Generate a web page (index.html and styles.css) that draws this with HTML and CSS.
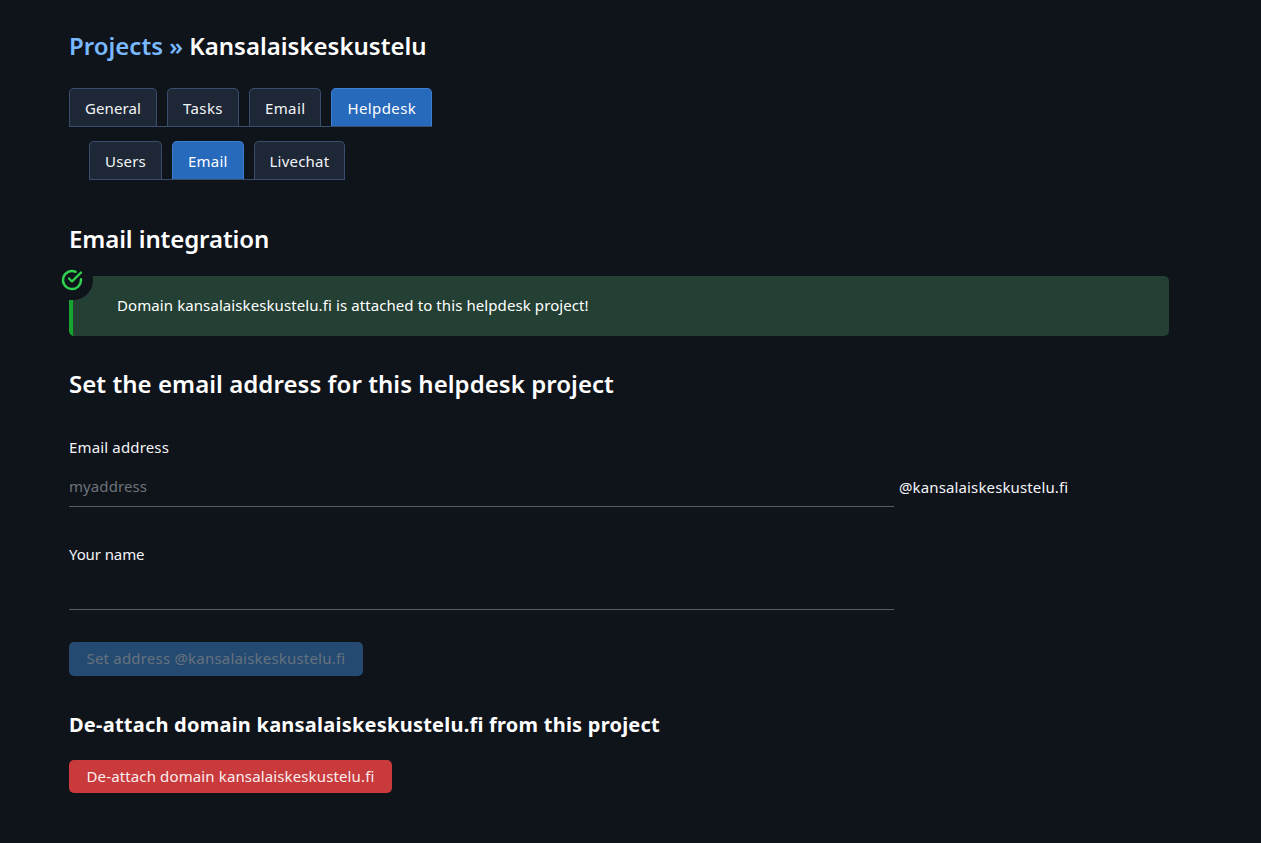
FILE: index.html
```html
<!DOCTYPE html>
<html lang="en">
<head>
<meta charset="utf-8">
<title>Kansalaiskeskustelu</title>
<link rel="stylesheet" href="styles.css">
</head>
<body>
<main class="page">
  <h1 class="title"><a href="#" class="crumb">Projects »</a> Kansalaiskeskustelu</h1>
  <nav class="tabs">
    <a href="#" class="tab tight">General</a>
    <a href="#" class="tab roomy">Tasks</a>
    <a href="#" class="tab roomy">Email</a>
    <a href="#" class="tab active wide">Helpdesk</a>
  </nav>
  <nav class="tabs sub">
    <a href="#" class="tab">Users</a>
    <a href="#" class="tab active">Email</a>
    <a href="#" class="tab">Livechat</a>
  </nav>
  <h2 class="heading first">Email integration</h2>
  <div class="alert">
    <span class="alert-icon">
      <svg viewBox="0 0 24 24" width="24" height="24" fill="none" stroke="#2fd14f" stroke-width="2.4" stroke-linecap="round" stroke-linejoin="round">
        <path d="M21 11.1V12a9 9 0 1 1-5.3-8.2"/>
        <path d="M21 4.5 12 13.5 9 10.5"/>
      </svg>
    </span>
    <p class="alert-text">Domain kansalaiskeskustelu.fi is attached to this helpdesk project!</p>
  </div>
  <h2 class="heading second">Set the email address for this helpdesk project</h2>
  <form class="form">
    <div class="field">
      <label class="label" for="addr">Email address</label>
      <div class="input-row">
        <input class="input" id="addr" placeholder="myaddress">
        <span class="suffix">@kansalaiskeskustelu.fi</span>
      </div>
    </div>
    <div class="field name">
      <label class="label" for="name">Your name</label>
      <div class="input-row">
        <input class="input" id="name">
      </div>
    </div>
    <button type="button" class="btn disabled" disabled>Set address @kansalaiskeskustelu.fi</button>
  </form>
  <h3 class="subheading">De-attach domain kansalaiskeskustelu.fi from this project</h3>
  <button type="button" class="btn danger">De-attach domain kansalaiskeskustelu.fi</button>
</main>
</body>
</html>
```
FILE: styles.css
```css
* { box-sizing: border-box; }
html, body { margin: 0; height: 100%; }
body {
  background: #0f131a;
  color: #fff;
  font-family: "Noto Sans", "Open Sans", sans-serif;
  font-size: 15px;
  letter-spacing: 0.09px;
  overflow: hidden;
}
.page { width: 1100px; margin-left: 69px; padding-top: 29px; }
.title { margin: 0; font-size: 24px; line-height: 33px; font-weight: 600; letter-spacing: 0; }
.crumb { color: #78b9ff; text-decoration: none; }
.tabs {
  display: inline-flex;
  gap: 10px;
  margin-top: 26px;
  border-bottom: 1px solid #3a4d6e;
  vertical-align: top;
}
.tabs.sub { display: flex; width: fit-content; margin: 14px 0 0 20px; }
.tab {
  display: block;
  height: 38px;
  padding: 0 15px;
  line-height: 39px;
  color: #f3f5f8;
  text-decoration: none;
  background: #1e2736;
  border: 1px solid #3a4d6e;
  border-bottom: 0;
  border-radius: 5px 5px 0 0;
  letter-spacing: 0.2px;
}
.tab.tight { letter-spacing: 0.1px; }
.tab.roomy { letter-spacing: 0.4px; }
.tab.wide { letter-spacing: 0.4px; }
.tab.active { background: #2769bb; border-color: #3f7fd0; color: #fff; }
.heading { margin: 0; font-size: 24px; line-height: 33px; font-weight: 600; letter-spacing: 0.05px; }
.heading.first { margin-top: 42px; letter-spacing: -0.1px; }
.heading.second { margin-top: 31px; }
.alert {
  position: relative;
  margin-top: 21px;
  height: 60px;
  background: #243f33;
  border-left: 4px solid #16a32f;
  border-radius: 5px;
  display: flex;
  align-items: center;
  padding: 0 0 2px 44px;
}
.alert-text { margin: 0; line-height: 20px; }
.alert-icon {
  position: absolute;
  left: -16px;
  top: -12px;
  width: 36px;
  height: 36px;
  background: #0f131a;
  border-radius: 0 0 20px 0;
  display: flex;
  padding: 4px 0 0 3px;
}
.alert-icon svg { display: block; }
.field { margin-top: 37px; }
.field.name { margin-top: 37px; }
.field.name .input-row { margin-top: 5px; }
.field.name .label { letter-spacing: -0.1px; }
.label { display: block; line-height: 20px; color: #f3f5f8; letter-spacing: 0.15px; }
.input-row { display: flex; align-items: center; margin-top: 9px; }
.input {
  width: 825px;
  height: 41px;
  padding: 0;
  background: transparent;
  border: 0;
  border-bottom: 1px solid #5a5d62;
  color: #fff;
  font: inherit;
  letter-spacing: inherit;
  outline: none;
}
.input::placeholder { color: #6f7379; opacity: 1; }
.suffix { margin-left: 5px; color: #f3f5f8; letter-spacing: 0.13px; }
.btn {
  display: block;
  height: 34px;
  padding: 0 17.5px 2px;
  border: 0;
  border-radius: 5px;
  font: inherit;
  color: #fff;
}
.btn.disabled { margin-top: 32px; background: #244a71; color: #66727e; letter-spacing: 0.2px; }
.btn.danger { margin-top: 21px; height: 33px; background: #c93a3c; color: #fbeeee; letter-spacing: 0.13px; }
.subheading { margin: 35px 0 0; font-size: 20px; line-height: 28px; font-weight: 700; letter-spacing: 0.23px; }
```
